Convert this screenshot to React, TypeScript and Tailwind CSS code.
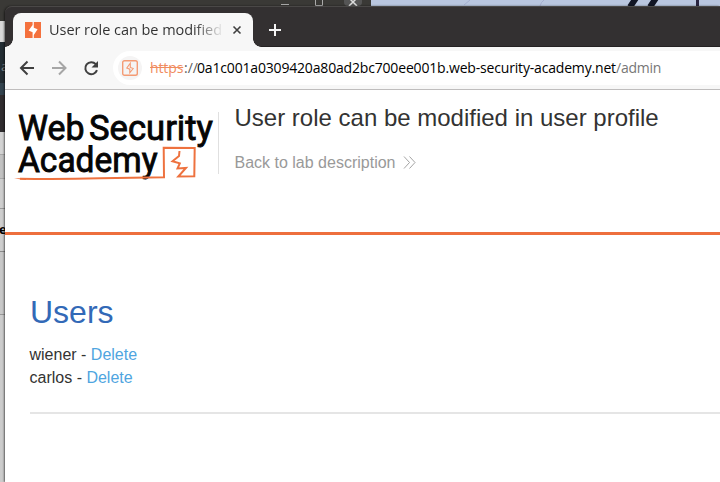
import React from "react";

const ui = "font-['Open_Sans','Noto_Sans',sans-serif]";
const strips = [
  "h-[21px] bg-[#3a3936]",
  "h-[21px] bg-[#d9d9d9]",
  "h-[41px] bg-[#232d33]",
  "h-[12px] bg-[#33434e]",
  "h-[37px] bg-[#302d2f]",
  "h-[23px] bg-[#d3d3d3] border-b border-[#a9a9a9]",
  "h-[24px] bg-[#c2c2c2] border-b border-[#a9a9a9]",
  "h-[30px] bg-[#cecece] border-b border-[#999]",
  "h-[43px] bg-[#cecece] border-b border-[#8c8c8c]",
  "h-[63px] bg-[#c8c8c8] border-b border-[#999]",
  "h-[167px] bg-[#cccccc]",
];

function Desktop() {
  return (
    <div className="absolute inset-0 overflow-hidden">
      <div className="flex h-full w-[6px] flex-col">
        {strips.map((s, i) => (
          <div key={i} className={"shrink-0 " + s} />
        ))}
      </div>
      <span className={"absolute left-[1px] top-[59px] text-[13px] leading-[15px] text-[#87898b] " + ui}>a</span>
      <span className={"absolute left-[-1px] top-[222px] text-[13px] font-bold leading-[15px] text-black " + ui}>e</span>
      <svg className="absolute left-0 top-0" width="720" height="7">
        <rect width="371" height="7" fill="#3a3936" />
        <rect x="371" width="349" height="7" fill="#b9c6df" />
        <path d="M281 4.5h8M315.500 0v5.500h7V0" stroke="#aaa" fill="none" />
        <rect x="344" y="-8" width="18" height="14" rx="4" fill="#555" />
        <path d="M349 6l7-7M357 6l-7-7" stroke="#ddd" strokeWidth="1.500" />
        <path d="M544 0q-3 2-4 6M464 5l6-5" stroke="#a5afd0" fill="none" />
        <path d="M630 7l6-9M650 7l6-9" stroke="#111525" strokeWidth="6" />
        <path d="M697.500 0v7" stroke="#29233f" strokeWidth="3" />
      </svg>
    </div>
  );
}

function Favicon() {
  return (
    <svg width="16" height="16" viewBox="0 0 16 16" className="shrink-0">
      <rect width="16" height="16" fill="#f4713d" />
      <path d="M8.800 0v5.700L12.600 7.200 8.800 13v3H7.600v-5.700L3.600 8.600 7.600 3V0z" fill="#fff" />
    </svg>
  );
}

function TabStrip() {
  return (
    <div className="flex h-[41px] items-end rounded-tl-[7px] border-t border-[#4a4847] bg-[#333031] shadow-[inset_0_-1px_0_#242122]">
      <div className="relative ml-2 flex h-[34px] w-[240px] items-center rounded-t-[8px] bg-[#f7f7f7] pl-3">
        <div className="absolute bottom-0 -left-2 h-2 w-2 bg-[radial-gradient(circle_at_0_0,#333031_7.500px,#f7f7f7_8px)]" />
        <div className="absolute -right-2 bottom-0 h-2 w-2 bg-[radial-gradient(circle_at_100%_0,#333031_7.500px,#f7f7f7_8px)]" />
        <Favicon />
        <div className={"ml-[8px] w-[173px] whitespace-nowrap bg-[linear-gradient(90deg,#303030_145px,#f7f7f7_175px)] bg-clip-text text-[14.500px] leading-5 tracking-[-0.050px] text-transparent " + ui}>
          User role can be modified
        </div>
        <svg width="10" height="10" viewBox="0 0 10 10" className="ml-[10px]">
          <path d="M1.500 1.500l7 7M8.500 1.500l-7 7" stroke="#404040" strokeWidth="1.600" />
        </svg>
      </div>
      <svg width="14" height="14" viewBox="0 0 14 14" className="mb-[10px] ml-[15px]">
        <path d="M7 1v12M1 7h12" stroke="#f5f5f5" strokeWidth="2" />
      </svg>
    </div>
  );
}

function Toolbar() {
  return (
    <div className="flex h-[43px] items-center border-b border-[#bfbdbd] bg-[#f7f7f7]">
      <svg width="108" height="42" viewBox="0 0 108 42" fill="none" strokeWidth="2">
        <path d="M29 21H16.500M22.500 14.500l-6.500 6.500 6.500 6.500" stroke="#404040" />
        <path d="M47 21h12.500M54 14.500l6.500 6.500-6.500 6.500" stroke="#a6a6a6" />
        <path d="M90.800 17.200A6 6 0 1 0 92 23.200" stroke="#404040" />
        <path d="M93 14v6.500h-6.500z" fill="#404040" />
      </svg>
      <div className="flex h-[34px] flex-1 items-center rounded-l-full bg-white pl-[5px]">
        <div className="flex h-6 w-6 items-center justify-center rounded-full bg-[#f5f4f4]">
          <svg width="16" height="16" viewBox="0 0 16 16" fill="none">
            <rect x=".7" y=".7" width="14.600" height="14.600" rx="1.800" stroke="#f49b74" strokeWidth="1.400" />
            <path d="M8.300 3.200v4.200l2.900 1.200-3.400 4.200V9.200L4.800 8z" stroke="#f49b74" strokeWidth="1.100" />
          </svg>
        </div>
        <div className={"ml-[8px] flex whitespace-nowrap text-[14px] leading-5 " + ui}>
          <span className="w-[34px] tracking-[-0.120px] text-[#f08c5e] line-through">https</span>
          <span className="w-[13px] text-[#606060]">://</span>
          <span className="w-[419px] tracking-[-0.175px] text-black">0a1c001a0309420a80ad2bc700ee001b.web-security-academy.net</span>
          <span className="tracking-[-0.250px] text-[#777]">/admin</span>
        </div>
      </div>
    </div>
  );
}

function Logo() {
  return (
    <svg width="205" height="76" viewBox="13 108 205 76" className="shrink-0">
      <g fill="#050505" stroke="#050505" strokeWidth=".9" fontFamily="Roboto, sans-serif" fontSize="35.800" fontWeight="400">
        <text x="18" y="140" textLength="66.500" lengthAdjust="spacingAndGlyphs">Web</text>
        <text x="89" y="140" textLength="124" lengthAdjust="spacingAndGlyphs">Security</text>
        <text x="18" y="172.300" textLength="139.500" lengthAdjust="spacingAndGlyphs">Academy</text>
      </g>
      <path d="M14 178.300l12-.1v1.700l-5-.3z" fill="#ee723f" />
      <path d="M20 178.700Q60 179.500 100 178.200L164 177.200l-.3-29.500 31 .2-.4 28.400-16 .2 7.700-8.500-8.500.5 2.300-5.200-7.300-2 6.500-5.300.5-5" fill="none" stroke="#ee723f" strokeWidth="2" />
    </svg>
  );
}

function Page() {
  return (
    <main className="flex-1 bg-white font-['Liberation_Sans',Arial,sans-serif] text-[#333332]">
      <header className="flex h-[145px] items-start border-b-[3px] border-[#ee6f3d] pt-[18px]">
        <div className="ml-[8px] flex h-[76px]">
          <Logo />
        </div>
        <div className="mt-[4px] h-[62px] border-l border-[#e0e0e0]" />
        <div className="ml-[15.500px]">
          <h1 className="mt-[-4px] text-[24px] leading-7">User role can be modified in user profile</h1>
          <a className="mt-[20.500px] flex items-center text-[16px] leading-5 text-[#999]">
            Back to lab description
            <svg width="13" height="13" viewBox="0 0 13 13" className="ml-[8px]" fill="none" stroke="#999">
              <path d="M1 .5l5.500 6-5.500 6M6.500 .5l5.500 6-5.500 6" strokeWidth=".9" />
            </svg>
          </a>
        </div>
      </header>
      <section className="ml-[24.500px] pt-[59px]">
        <h1 className="ml-[0.500px] text-[32px] leading-[37px] text-[#3269b7]">Users</h1>
        <div className="mt-[12px] text-[16px] leading-[23px]">
          <div>wiener - <a className="text-[#4fa5df]">Delete</a></div>
          <div>carlos - <a className="text-[#4fa5df]">Delete</a></div>
        </div>
        <div className="mt-[23px] h-[2px] bg-[#e5e5e5]" />
      </section>
    </main>
  );
}

export default function App() {
  return (
    <div className="relative h-[482px] w-[720px] overflow-hidden bg-[#3a3936]">
      <Desktop />
      <div className="absolute bottom-0 left-[5px] right-0 top-[6px] flex flex-col rounded-tl-[7px] shadow-[-1px_0_2px_#0008]">
        <TabStrip />
        <Toolbar />
        <Page />
      </div>
    </div>
  );
}
